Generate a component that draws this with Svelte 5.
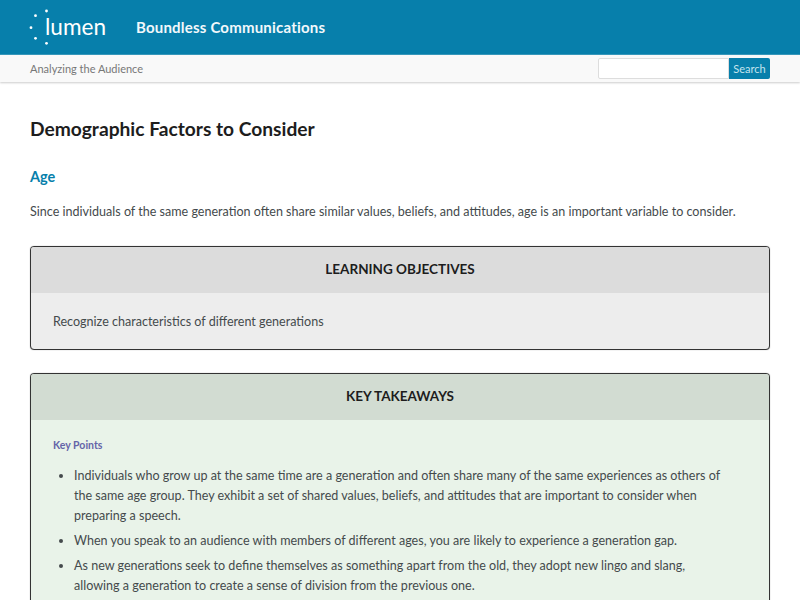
<script>
	let objectives = 'Recognize characteristics of different generations';
	let points = [
		'Individuals who grow up at the same time are a generation and often share many of the same experiences as others of the same age group. They exhibit a set of shared values, beliefs, and attitudes that are important to consider when preparing a speech.',
		'When you speak to an audience with members of different ages, you are likely to experience a generation gap.',
		'As new generations seek to define themselves as something apart from the old, they adopt new lingo and slang, allowing a generation to create a sense of division from the previous one.'
	];
</script>

<header class="top">
	<svg class="logo" width="84" height="44" viewBox="0 0 84 44">
		<g fill="#fff">
			<circle cx="17.5" cy="6" r="1.4" />
			<circle cx="6.5" cy="10.7" r="1.4" />
			<circle cx="2" cy="22.7" r="1.4" />
			<circle cx="6.5" cy="33.3" r="1.4" />
			<circle cx="17.5" cy="38.3" r="1.4" />
		</g>
		<text x="16" y="30" class="logo-text" textLength="61" lengthAdjust="spacingAndGlyphs">lumen</text>
	</svg>
	<span class="title">Boundless Communications</span>
</header>

<div class="subbar">
	<span class="crumb">Analyzing the Audience</span>
	<form class="search" on:submit|preventDefault>
		<input type="text" />
		<button>Search</button>
	</form>
</div>

<main>
	<h1>Demographic Factors to Consider</h1>
	<h2>Age</h2>
	<p class="intro">Since individuals of the same generation often share similar values, beliefs, and attitudes, age is an important variable to consider.</p>

	<section class="box grey">
		<h3>LEARNING OBJECTIVES</h3>
		<div class="body">
			<p>{objectives}</p>
		</div>
	</section>

	<section class="box green">
		<h3>KEY TAKEAWAYS</h3>
		<div class="body">
			<h4>Key Points</h4>
			<ul>
				{#each points as point}
					<li>{point}</li>
				{/each}
			</ul>
		</div>
	</section>
</main>

<style>
	:global(body) {
		font-family: "Lato", sans-serif;
		color: #444a4c;
		background: #fff;
		height: 600px;
		overflow: hidden;
	}

	.top {
		height: 54px;
		background: #077fab;
		border-bottom: 1px solid #2b93b8;
		display: flex;
		align-items: center;
		padding-left: 29px;
	}

	.logo {
		flex: none;
	}

	.logo-text {
		font-family: "Lato", sans-serif;
		font-size: 24px;
		fill: #fff;
	}

	.title {
		margin-left: 23px;
		font-size: 15px;
		font-weight: 700;
		letter-spacing: 0.2px;
		color: #f2f8fb;
	}

	.subbar {
		height: 27px;
		background: #f9f9f9;
		box-shadow: 0 1px 2px #ccc;
		display: flex;
		align-items: center;
		justify-content: space-between;
		padding: 0 30px;
	}

	.crumb {
		font-size: 11px;
		color: #777;
	}

	.search {
		display: flex;
	}

	.search input {
		width: 131px;
		height: 21px;
		box-sizing: border-box;
		border: 1px solid #ddd;
		border-radius: 2px 0 0 2px;
		padding: 0;
		background: #fff;
	}

	.search button {
		width: 41px;
		height: 21px;
		border: none;
		border-radius: 0 2px 2px 0;
		padding: 0;
		background: #077fab;
		color: #c4e4ee;
		font-family: inherit;
		font-size: 11px;
	}

	main {
		padding: 0 30px;
	}

	h1 {
		margin: 35px 0 0;
		font-size: 19.2px;
		line-height: 24px;
		font-weight: 700;
		color: #1d1d1d;
	}

	h2 {
		margin: 26px 0 0;
		font-size: 14.5px;
		line-height: 20px;
		font-weight: 700;
		color: #077fab;
	}

	.intro {
		margin: 15px 0 0;
		font-size: 12.55px;
		line-height: 20px;
	}

	.box {
		border: 1px solid #333;
		border-radius: 4px;
		box-shadow: 0 0 1px #888;
		overflow: hidden;
	}

	.box h3 {
		margin: 0;
		height: 46px;
		font-size: 13.5px;
		line-height: 45px;
		font-weight: 700;
		text-align: center;
		color: #1d1d1d;
	}

	.box .body {
		padding: 17px 22px;
	}

	.box p {
		margin: 1px 0 -1px;
		font-size: 12.55px;
		line-height: 22px;
	}

	.grey {
		margin-top: 24px;
		background: #ededed;
	}

	.grey h3 {
		background: #dcdcdc;
	}

	.green {
		margin-top: 23px;
		background: #e9f3e9;
	}

	.green h3 {
		background: #d2dcd2;
	}

	h4 {
		margin: 0;
		font-size: 10.5px;
		line-height: 16px;
		font-weight: 700;
		color: #6464a8;
	}

	ul {
		margin: 13px 0 0;
		padding: 0 20px 0 21px;
	}

	li {
		font-size: 12.55px;
		line-height: 20px;
		margin-bottom: 5px;
	}
</style>
